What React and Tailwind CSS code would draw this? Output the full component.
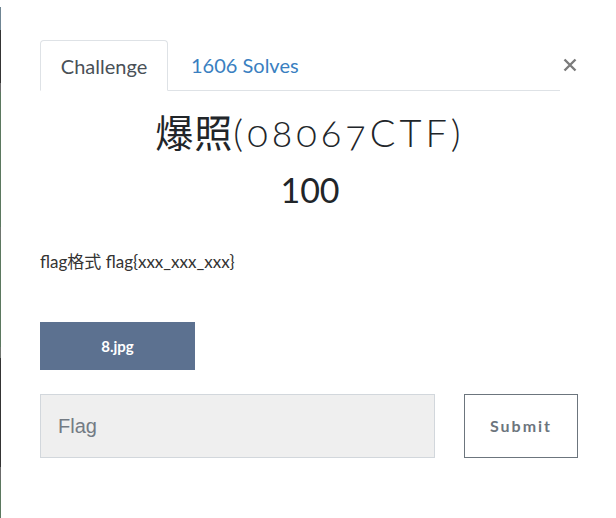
import React, { useState } from "react";

const edge = [
  { h: 7, c: "bg-white" },
  { h: 23, c: "bg-[#6f8593]" },
  { h: 53, c: "bg-[#343434]" },
  { h: 9, c: "bg-[#6b6b6b]" },
  { h: 135, c: "bg-[#5b785f]" },
  { h: 13, c: "bg-[#6f756f]" },
  { h: 107, c: "bg-[#5b785f]" },
  { h: 11, c: "bg-[#6f756f]" },
  { h: 109, c: "bg-[#343434]" },
  { h: 13, c: "bg-[#6b6b6b]" },
  { h: 38, c: "bg-[#5b785f]" },
];

export default function App() {
  const [tab, setTab] = useState("challenge");
  const [flag, setFlag] = useState("");

  return (
    <div className="flex min-h-[518px] w-[616px] bg-white font-['Lato','Noto_Sans_CJK_SC',sans-serif] text-[#212529]">
      {/* sliver of the page behind the modal */}
      <div className="flex w-px flex-col">
        {edge.map((s, i) => (
          <div key={i} className={s.c} style={{ height: s.h }} />
        ))}
      </div>

      <div className="w-[540px] ml-[39px] pt-[40px]">
        <div className="flex">
          <nav className="flex w-[520px] border-b border-[#dee2e6]">
            <button
              onClick={() => setTab("challenge")}
              className="-mb-px h-[51px] w-[128px] rounded-t-[4px] border border-[#dee2e6] border-b-white bg-white text-[20px] text-[#495057]"
            >
              Challenge
            </button>
            <button
              onClick={() => setTab("solves")}
              className="h-[50px] px-[23px] text-[20px] text-[#3a7fc1]"
            >
              1606 Solves
            </button>
          </nav>
          <button className="flex h-[30px] flex-1 items-center justify-center mt-[10px]">
            <svg width="14" height="14" viewBox="0 0 14 14">
              <path d="M1.5 1.5L12.5 12.5M12.5 1.5L1.5 12.5" stroke="#7b7b7b" strokeWidth="2.4" />
            </svg>
          </button>
        </div>

        <h3 className="mt-[19px] text-center text-[38px] leading-[44px] font-light oldstyle-nums tracking-[4px]">
          <span className="font-normal tracking-[1px]">爆照</span>(08067CTF)
        </h3>
        <h4 className="mt-[16px] text-center text-[34px] leading-[40px] font-normal">100</h4>

        <p className="mt-[41px] text-[17px] leading-[22px] text-[#333]">flag格式 flag{"{xxx_xxx_xxx}"}</p>

        <button className="mt-[49px] flex h-[48px] w-[155px] items-center justify-center bg-[#5c7190] text-[15px] font-bold text-white">
          8.jpg
        </button>

        <div className="mt-[24px] flex">
          <input
            value={flag}
            onChange={(e) => setFlag(e.target.value)}
            placeholder="Flag"
            className="h-[64px] w-[395px] border border-[#d2d7dc] bg-[#efefef] px-[17px] font-['Liberation_Sans',sans-serif] text-[20px] text-[#495057] placeholder:text-[#737b84] outline-none"
          />
          <button className="ml-[29px] h-[64px] w-[114px] border border-[#6c757d] text-[16px] font-bold tracking-[2px] text-[#6c757d]">
            Submit
          </button>
        </div>
      </div>
    </div>
  );
}
